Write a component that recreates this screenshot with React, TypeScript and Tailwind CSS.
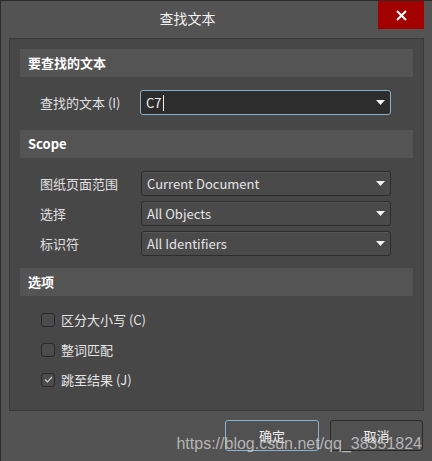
import { ChevronDown } from "lucide-react";

const cjk = "font-['Noto_Sans_CJK_SC','Noto_Sans',sans-serif]";

function SectionHeader({ title }: { title: string }) {
  return (
    <div className="flex h-[28px] items-center bg-[#545454] pl-[8px] text-[13px] font-bold text-white">
      {title}
    </div>
  );
}

function Caret() {
  return (
    <svg width="9" height="5" viewBox="0 0 9 5" className="shrink-0">
      <path d="M0 0h9L4.5 5z" fill="#f2f2f2" />
    </svg>
  );
}

function Select({ value }: { value: string }) {
  return (
    <div className="flex h-[25px] w-[250px] items-center justify-between rounded-[3px] border border-[#2c2c2c] bg-[#4a4a4a] pl-[5px] pr-[5px] text-[13px] text-[#e4e4e4] shadow-[inset_0_1px_0_#555]">
      <span>{value}</span>
      <Caret />
    </div>
  );
}

function Check({ label, checked }: { label: string; checked?: boolean }) {
  return (
    <div className="flex h-[15px] items-center gap-[6px] text-[13px] text-[#e4e4e4]">
      <div className="flex h-[14px] w-[14px] items-center justify-center rounded-[3px] border border-[#2a2a2a] bg-[#4b4b4b]">
        {checked && (
          <svg width="9" height="7" viewBox="0 0 9 7">
            <path d="M1 3.5L3.5 6L8 1" fill="none" stroke="#cfcfcf" strokeWidth="1.2" />
          </svg>
        )}
      </div>
      <span>{label}</span>
    </div>
  );
}

export default function App() {
  return (
    <div
      className={`relative flex h-[461px] w-[432px] flex-col border-l border-t border-[#2b2b2b] bg-[#535353] ${cjk}`}
    >
      {/* title bar */}
      <div className="relative flex h-[37px] items-center justify-center pb-[2px] text-[14px] text-[#f0f0f0]">
        <span className="ml-[-58px]">查找文本</span>
        <button className="absolute right-[8px] top-0 flex h-[28px] w-[46px] items-center justify-center bg-[#a30000]">
          <svg width="11" height="11" viewBox="0 0 11 11">
            <path d="M1 1l9 9M10 1l-9 9" stroke="#fff" strokeWidth="2" />
          </svg>
        </button>
      </div>

      {/* content panel */}
      <div className="mx-[8px] flex h-[373px] flex-col border border-[#3a3a3a] bg-[#474747] px-[10px] pt-[10px]">
        <SectionHeader title="要查找的文本" />
        <div className="mt-[13px] flex h-[25px] items-center pl-[20px]">
          <span className="w-[100px] text-[13px] text-[#e0e0e0]">查找的文本 (I)</span>
          <div className="flex h-[25px] w-[251px] items-center justify-between rounded-[3px] border border-[#8eaec6] bg-[#2d2d2d] pl-[5px] pr-[5px] text-[13px] text-[#f0f0f0]">
            <span className="flex items-center">
              C7<span className="ml-[1px] h-[16px] w-px bg-[#f0f0f0]" />
            </span>
            <Caret />
          </div>
        </div>

        <div className="mt-[15px]">
          <SectionHeader title="Scope" />
        </div>
        <div className="mt-[13px] flex flex-col gap-[5px] pl-[20px] text-[13px] text-[#e0e0e0]">
          <div className="flex items-center">
            <span className="w-[101px]">图纸页面范围</span>
            <Select value="Current Document" />
          </div>
          <div className="flex items-center">
            <span className="w-[101px]">选择</span>
            <Select value="All Objects" />
          </div>
          <div className="flex items-center">
            <span className="w-[101px]">标识符</span>
            <Select value="All Identifiers" />
          </div>
        </div>

        <div className="mt-[12px]">
          <SectionHeader title="选项" />
        </div>
        <div className="mt-[16px] flex flex-col gap-[15px] pl-[21px]">
          <Check label="区分大小写 (C)" />
          <Check label="整词匹配" />
          <Check label="跳至结果 (J)" checked />
        </div>
      </div>

      {/* buttons */}
      <div className="mt-[9px] flex justify-end gap-[11px] pr-[9px]">
        <button className="h-[31px] w-[94px] rounded-[3px] border border-[#8eb0cc] bg-[#515151] text-[13px] text-[#f0f0f0]">
          确定
        </button>
        <button className="h-[31px] w-[93px] rounded-[3px] border border-[#2a2a2a] bg-[#515151] text-[13px] text-[#f0f0f0]">
          取消
        </button>
      </div>

      {/* watermark */}
      <div className="pointer-events-none absolute right-[10px] top-[431px] font-['Liberation_Sans',sans-serif] text-[16px] text-[#d8d8d8]/75">
        https://blog.csdn.net/qq_38351824
      </div>
    </div>
  );
}
